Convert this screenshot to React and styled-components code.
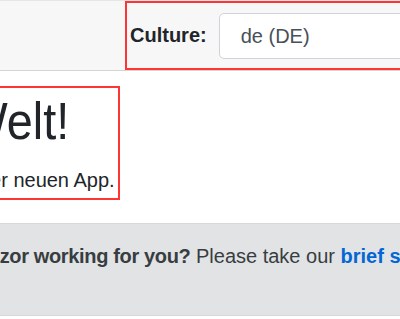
import React from "react";
import styled, { createGlobalStyle } from "styled-components";

const Global = createGlobalStyle`
  html, body {
    margin: 0;
    padding: 0;
    background: #ffffff;
  }
  body {
    font-family: "Liberation Sans", Arial, sans-serif;
    color: #212529;
    overflow: hidden;
  }
`;

const Page = styled.div`
  width: 400px;
  height: 319px;
  overflow: hidden;
  display: flex;
  flex-direction: column;
`;

const TopRow = styled.header`
  height: 69px;
  flex: none;
  background: #f7f7f7;
  border-top: 1px solid #e6e6e6;
  border-bottom: 1px solid #d6d5d5;
  display: flex;
  align-items: stretch;
  padding-left: 125px;
  box-sizing: content-box;
`;

const Highlighted = styled.div`
  border: 2px solid #ff3535;
  box-sizing: border-box;
`;

const CultureBox = styled(Highlighted)`
  flex: 1;
  margin-right: -40px;
  display: flex;
  align-items: center;
  padding-left: 3px;
  gap: 12px;
`;

const Label = styled.label`
  font-size: 20px;
  font-weight: 700;
  color: #212529;
`;

const Select = styled.select`
  appearance: none;
  width: 300px;
  height: 46px;
  flex: none;
  border: 1px solid #ced4da;
  border-radius: 5px;
  background: #ffffff;
  padding: 0 0 0 21px;
  font-family: inherit;
  font-size: 20px;
  color: #495057;
`;

const Main = styled.main`
  display: flex;
  flex-direction: column;
  align-items: flex-start;
  margin-left: -200px;
  padding-top: 15px;
`;

const Intro = styled(Highlighted)`
  width: 320px;
  padding: 2px 0 3px 18px;
`;

const Title = styled.h1`
  margin: 0 0 13px;
  padding-left: 12px;
  font-size: 52px;
  font-weight: 400;
  line-height: 1.2;
  color: #212529;
  white-space: nowrap;
  transform: scaleX(0.9);
  transform-origin: 0 0;
`;

const Lead = styled.p`
  margin: 0;
  font-size: 20px;
  line-height: 30px;
  color: #212529;
  white-space: nowrap;
`;

const Alert = styled.div`
  margin-top: 23px;
  width: 900px;
  height: 93px;
  box-sizing: border-box;
  background: #e2e3e5;
  border: 1px solid #d6d8db;
  color: #383d41;
  padding: 17px 0 0 75px;
  font-size: 20px;
  line-height: 30px;
  white-space: nowrap;
  display: flex;
  align-items: flex-start;
`;

const PencilIcon = styled.svg`
  width: 16px;
  height: 16px;
  margin: 7px 10px 0 0;
  flex: none;
`;

const Strong = styled.strong`
  font-weight: 700;
  letter-spacing: -0.35px;
`;

const SurveyLink = styled.a`
  color: #0366d6;
  font-weight: 700;
  text-decoration: none;
`;

export default function App() {
  return (
    <>
      <Global />
      <Page>
        <TopRow>
          <CultureBox>
            <Label htmlFor="culture">Culture:</Label>
            <Select id="culture" defaultValue="de-DE">
              <option value="de-DE">de (DE)</option>
              <option value="en-US">en (US)</option>
            </Select>
          </CultureBox>
        </TopRow>
        <Main>
          <Intro>
            <Title>Hallo, Welt!</Title>
            <Lead>Willkommen bei Ihrer neuen App.</Lead>
          </Intro>
          <Alert role="alert">
            <PencilIcon viewBox="0 0 8 8" aria-hidden="true">
              <path fill="#383d41" d="M6 0L5 1l2 2 1-1-2-2zM4 2L0 6v2h2l4-4-2-2z" />
            </PencilIcon>
            <span>
              <Strong>How is Blazor working for you?</Strong>{" "}
              Please take our <SurveyLink href="#survey">brief survey</SurveyLink>{" "}
              and tell us what you think.
            </span>
          </Alert>
        </Main>
      </Page>
    </>
  );
}
